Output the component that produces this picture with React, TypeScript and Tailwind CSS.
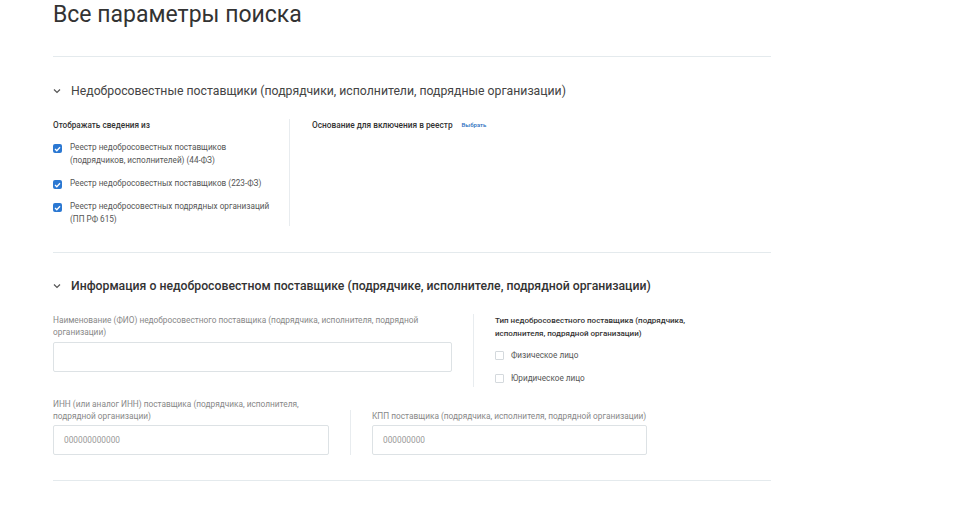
import React from "react";

const Chevron = () => (
  <svg width="8" height="6" viewBox="0 0 8 6" className="shrink-0">
    <path d="M1 1.5 L4 4.5 L7 1.5" fill="none" stroke="#555" strokeWidth="1.2" />
  </svg>
);

const Checked = () => (
  <span className="mt-[3px] flex h-[9px] w-[9px] shrink-0 items-center justify-center rounded-[2px] bg-[#2b78d2]">
    <svg width="7" height="6" viewBox="0 0 7 6">
      <path d="M1 3 L2.8 4.7 L6 1.2" fill="none" stroke="#fff" strokeWidth="1.3" />
    </svg>
  </span>
);

const Unchecked = () => (
  <span className="h-[9px] w-[9px] shrink-0 rounded-[1px] border border-[#d4d9dd] bg-white" />
);

export default function App() {
  return (
    <div className="h-[505px] w-[961px] overflow-hidden bg-white font-['Roboto',sans-serif]">
      <div className="ml-[53px] w-[718px]">
        <h1 className="text-[23px] font-normal leading-[30px] text-[#333]">Все параметры поиска</h1>
        <div className="mt-[26px] h-px bg-[#e4eaed]" />

        {/* Section 1 */}
        <div className="mt-[24px] flex h-[20px] items-center gap-[10px]">
          <Chevron />
          <span className="text-[12.25px] leading-[20px] text-[#444]">
            Недобросовестные поставщики (подрядчики, исполнители, подрядные организации)
          </span>
        </div>
        <div className="mt-[18px] flex">
          <div className="w-[236px]">
            <div className="text-[8.2px] font-medium leading-[12px] text-[#333]">Отображать сведения из</div>
            <div className="mt-[10px] flex flex-col gap-[10px] text-[8.2px] leading-[13px] text-[#555]">
              <div className="flex gap-[8px]">
                <Checked />
                <span>
                  Реестр недобросовестных поставщиков
                  <br />
                  (подрядчиков, исполнителей) (44-ФЗ)
                </span>
              </div>
              <div className="flex gap-[8px]">
                <Checked />
                <span>Реестр недобросовестных поставщиков (223-ФЗ)</span>
              </div>
              <div className="flex gap-[8px]">
                <Checked />
                <span>
                  Реестр недобросовестных подрядных организаций
                  <br />
                  (ПП РФ 615)
                </span>
              </div>
            </div>
          </div>
          <div className="border-l border-[#e8ecef] pl-[22px]">
            <div className="flex items-center gap-[9px]">
              <span className="text-[8.3px] font-medium leading-[12px] text-[#333]">
                Основание для включения в реестр
              </span>
              <span className="text-[6px] font-medium leading-[12px] text-[#2b6fc0]">Выбрать</span>
            </div>
          </div>
        </div>
        <div className="mt-[26px] h-px bg-[#e4eaed]" />

        {/* Section 2 */}
        <div className="mt-[23px] flex h-[20px] items-center gap-[10px]">
          <Chevron />
          <span className="text-[12.25px] font-medium leading-[20px] text-[#333]">
            Информация о недобросовестном поставщике (подрядчике, исполнителе, подрядной организации)
          </span>
        </div>
        <div className="mt-[18px] flex">
          <div className="w-[399px]">
            <div className="text-[8.3px] leading-[12px] text-[#888]">
              Наименование (ФИО) недобросовестного поставщика (подрядчика, исполнителя, подрядной
              <br />
              организации)
            </div>
            <div className="mt-[4px] h-[30px] rounded-[2px] border border-[#dde2e5] bg-white" />
          </div>
          <div className="ml-[21px] border-l border-[#e8ecef] pb-[2px] pl-[21px]">
            <div className="text-[8px] font-medium leading-[13px] text-[#333]">
              Тип недобросовестного поставщика (подрядчика,
              <br />
              исполнителя, подрядной организации)
            </div>
            <div className="mt-[9px] flex items-center gap-[7px] text-[8.2px] leading-[13px] text-[#555]">
              <Unchecked />
              <span>Физическое лицо</span>
            </div>
            <div className="mt-[10px] flex items-center gap-[7px] text-[8.2px] leading-[13px] text-[#555]">
              <Unchecked />
              <span>Юридическое лицо</span>
            </div>
          </div>
        </div>

        <div className="mt-[11px] flex items-end">
          <div className="w-[276px]">
            <div className="text-[8.3px] leading-[12px] text-[#888]">
              ИНН (или аналог ИНН) поставщика (подрядчика, исполнителя,
              <br />
              подрядной организации)
            </div>
            <div className="mt-[3px] flex h-[30px] items-center rounded-[2px] border border-[#dde2e5] bg-white px-[10px] text-[8.3px] text-[#999]">
              000000000000
            </div>
          </div>
          <div className="ml-[21px] border-l border-[#e8ecef] pl-[21px]">
            <div className="text-[8.3px] leading-[12px] text-[#888]">
              КПП поставщика (подрядчика, исполнителя, подрядной организации)
            </div>
            <div className="mt-[3px] flex h-[30px] w-[275px] items-center rounded-[2px] border border-[#dde2e5] bg-white px-[10px] text-[8.3px] text-[#999]">
              000000000
            </div>
          </div>
        </div>
        <div className="mt-[25px] h-px bg-[#e4eaed]" />
      </div>
    </div>
  );
}
